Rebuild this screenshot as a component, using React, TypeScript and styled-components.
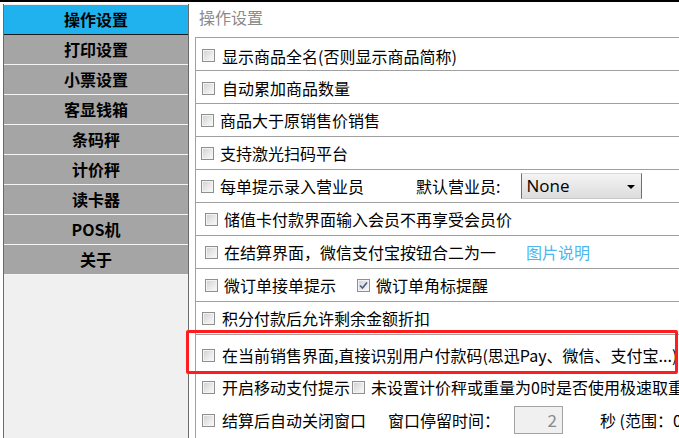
import React from "react";
import styled, { createGlobalStyle } from "styled-components";

const Global = createGlobalStyle`
  html, body { margin: 0; padding: 0; background: #ffffff; overflow: hidden; }
  body { font-family: "Noto Sans CJK SC", "Noto Sans", sans-serif; }
  * { box-sizing: border-box; }
`;

const Page = styled.div`
  width: 679px;
  height: 438px;
  overflow: hidden;
  border-top: 2px solid #000;
  display: flex;
  align-items: stretch;
  background: #fff;
`;

const Sidebar = styled.nav`
  width: 186px;
  flex: none;
  margin: 2px 0 0 3px;
  padding-top: 1px;
  border-left: 1px solid #6b6b6b;
  border-right: 1px solid #6b6b6b;
  background: #f0f0f0;
  display: flex;
  flex-direction: column;
`;

const NavItem = styled.div<{ $active?: boolean }>`
  height: 30px;
  flex: none;
  display: flex;
  align-items: center;
  justify-content: center;
  background: ${(p) => (p.$active ? "#1fb2ee" : "#a5a5a5")};
  border-bottom: 1px solid ${(p) => (p.$active ? "#1a1a1a" : "#f4f4f4")};
  font-weight: 700;
  font-size: 16px;
  line-height: 20px;
  color: #000;
  padding-bottom: 1px;
`;

const Main = styled.main`
  flex: 1;
  min-width: 0;
  margin-left: 6px;
  display: flex;
  flex-direction: column;
`;

const Title = styled.div`
  height: 35px;
  flex: none;
  padding: 4px 0 0 4px;
  font-size: 16px;
  line-height: 22px;
  color: #8a8a8a;
`;

const Panel = styled.section`
  flex: 1;
  border-top: 1px solid #a0a0a0;
  border-left: 1px solid #a0a0a0;
  display: flex;
  flex-direction: column;
`;

const Row = styled.div<{ $indent?: number; $h?: number; $line?: boolean; $shift?: number }>`
  position: relative;
  flex: none;
  height: ${(p) => p.$h ?? 33}px;
  display: flex;
  align-items: center;
  padding-left: ${(p) => p.$indent ?? 6}px;
  padding-top: ${(p) => p.$shift ?? 0}px;
  border-bottom: ${(p) => (p.$line === false ? "none" : "1px solid #a0a0a0")};
  white-space: nowrap;
  font-size: 16px;
  line-height: 20px;
  color: #000;
`;

const Box = styled.span<{ $gap?: number; $ml?: number }>`
  width: 13px;
  height: 13px;
  flex: none;
  margin-left: ${(p) => p.$ml ?? 0}px;
  margin-right: ${(p) => p.$gap ?? 7}px;
  border: 1px solid #8e8f8f;
  background: linear-gradient(135deg, #cfcfcf 0%, #e9e9e9 55%, #fbfbfb 100%);
  box-shadow: inset 0 0 0 1px #f3f3f3;
  display: flex;
  align-items: center;
  justify-content: center;
`;

const Label = styled.span<{ $ml?: number; $color?: string }>`
  margin-left: ${(p) => p.$ml ?? 0}px;
  color: ${(p) => p.$color ?? "#000"};
  flex: none;
`;

const Select = styled.div`
  margin-left: 21px;
  width: 121px;
  height: 26px;
  flex: none;
  border-left: 1px solid #6f6f6f;
  border-right: 1px solid #6f6f6f;
  border-top: 1px solid #d8d8d8;
  border-bottom: 1px solid #c8c8c8;
  background: linear-gradient(#f4f4f4, #dcdcdc);
  display: flex;
  align-items: center;
  justify-content: space-between;
  padding: 0 6px 0 4px;
  font-family: "Open Sans", "Noto Sans", sans-serif;
  font-size: 17px;
  line-height: 22px;
  color: #000;
`;

const Arrow = styled.span`
  width: 0;
  height: 0;
  border-left: 4px solid transparent;
  border-right: 4px solid transparent;
  border-top: 4px solid #000;
  margin-top: 2px;
`;

const NumBox = styled.div`
  margin-left: 14px;
  width: 49px;
  height: 28px;
  flex: none;
  border: 1px solid #a3a3a3;
  background: #f0f0f0;
  display: flex;
  align-items: center;
  justify-content: flex-end;
  padding-right: 5px;
  color: #8a8a8a;
  font-size: 17px;
`;

const Highlight = styled.div`
  position: absolute;
  left: -10px;
  top: -5px;
  right: 1px;
  bottom: -2px;
  border: 3px solid #ff1e1e;
  border-radius: 2px;
  pointer-events: none;
`;

const Check = () => (
  <svg width="9" height="9" viewBox="0 0 9 9">
    <path d="M1 4.5 L3.5 7 L8 1.5" fill="none" stroke="#4b5a8c" strokeWidth="1.6" />
  </svg>
);

const navItems = ["操作设置", "打印设置", "小票设置", "客显钱箱", "条码秤", "计价秤", "读卡器", "POS机", "关于"];

export default function App() {
  return (
    <>
      <Global />
      <Page>
        <Sidebar>
          {navItems.map((n, i) => (
            <NavItem key={n} $active={i === 0}>
              {n}
            </NavItem>
          ))}
        </Sidebar>
        <Main>
          <Title>操作设置</Title>
          <Panel>
            <Row $shift={3}>
              <Box />
              <Label>显示商品全名(否则显示商品简称)</Label>
            </Row>
            <Row $shift={2}>
              <Box />
              <Label>自动累加商品数量</Label>
            </Row>
            <Row $indent={5}>
              <Box $gap={6} />
              <Label>商品大于原销售价销售</Label>
            </Row>
            <Row $indent={5}>
              <Box $gap={6} />
              <Label>支持激光扫码平台</Label>
            </Row>
            <Row $indent={5}>
              <Box $gap={6} />
              <Label>每单提示录入营业员</Label>
              <Label $ml={52}>默认营业员:</Label>
              <Select>
                <span>None</span>
                <Arrow />
              </Select>
            </Row>
            <Row $indent={9}>
              <Box $gap={6} />
              <Label>储值卡付款界面输入会员不再享受会员价</Label>
            </Row>
            <Row $indent={9}>
              <Box $gap={6} />
              <Label>在结算界面，微信支付宝按钮合二为一</Label>
              <Label $ml={30} $color="#4cb6ee">图片说明</Label>
            </Row>
            <Row $indent={9}>
              <Box $gap={6} />
              <Label>微订单接单提示</Label>
              <Box $ml={21} $gap={6}>
                <Check />
              </Box>
              <Label>微订单角标提醒</Label>
            </Row>
            <Row>
              <Box />
              <Label>积分付款后允许剩余金额折扣</Label>
            </Row>
            <Row $h={37} $line={false} $shift={3}>
              <Box />
              <Label>在当前销售界面,直接识别用户付款码(思迅Pay、微信、支付宝...)</Label>
              <Highlight />
            </Row>
            <Row $h={30} $line={false}>
              <Box />
              <Label>开启移动支付提示</Label>
              <Box $ml={2} $gap={6} />
              <Label>未设置计价秤或重量为0时是否使用极速取重</Label>
            </Row>
            <Row $h={36} $line={false}>
              <Box />
              <Label>结算后自动关闭窗口</Label>
              <Label $ml={22}>窗口停留时间：</Label>
              <NumBox>2</NumBox>
              <Label $ml={37}>秒 (范围：0</Label>
            </Row>
          </Panel>
        </Main>
      </Page>
    </>
  );
}
